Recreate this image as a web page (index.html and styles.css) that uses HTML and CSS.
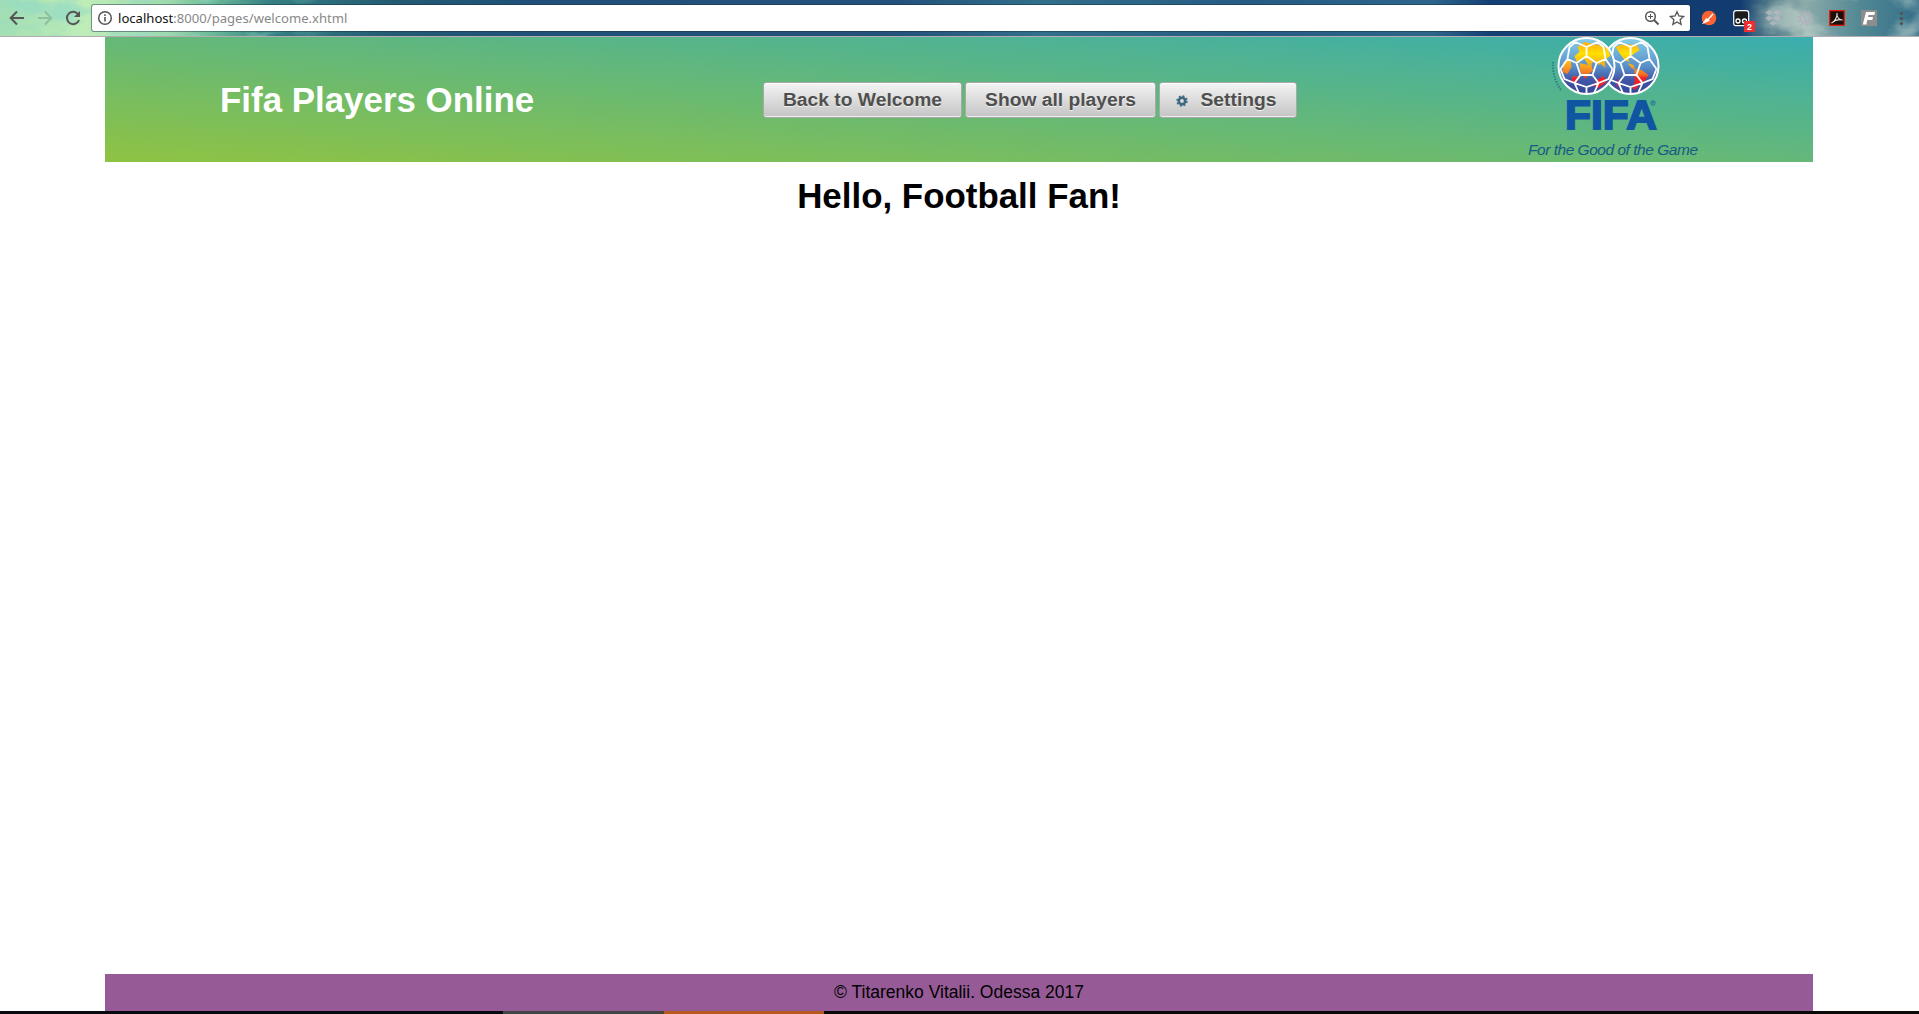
FILE: index.html
```html
<!DOCTYPE html>
<html lang="en">
<head>
<meta charset="utf-8">
<title>Fifa Players Online</title>
<link rel="stylesheet" href="styles.css">
</head>
<body>
<div class="toolbar">
  <svg class="sky" width="1919" height="36" aria-hidden="true">
    <defs>
      <filter id="cloud" x="0" y="0" width="100%" height="100%"><feTurbulence type="fractalNoise" baseFrequency=".025 .05" numOctaves="4" seed="8"/><feColorMatrix values="0 0 0 0 .3  0 0 0 0 .7  0 0 0 0 .56  4 0 0 0 -1.8"/></filter>
      <filter id="cloud2" x="0" y="0" width="100%" height="100%"><feTurbulence type="fractalNoise" baseFrequency=".018 .03" numOctaves="4" seed="4"/><feColorMatrix values="0 0 0 0 .68  0 0 0 0 .77  0 0 0 0 .69  4 0 0 0 -1.9"/></filter>
      <linearGradient id="fade"><stop offset="0" stop-color="#fff"/><stop offset=".6" stop-color="#fff"/><stop offset="1" stop-color="#000"/></linearGradient>
      <linearGradient id="fade2"><stop offset="0" stop-color="#000"/><stop offset=".15" stop-color="#fff"/><stop offset="1" stop-color="#fff"/></linearGradient>
      <mask id="m1"><rect width="340" height="36" fill="url(#fade)"/></mask>
      <mask id="m2"><rect x="1745" width="174" height="36" fill="url(#fade2)"/></mask>
    </defs>
    <g mask="url(#m1)"><rect width="340" height="36" filter="url(#cloud)" opacity=".7"/></g>
    <g mask="url(#m2)"><rect x="1745" width="174" height="36" filter="url(#cloud2)" opacity=".5"/></g>
  </svg>
  <svg class="nav-icons" width="92" height="36" fill="none" stroke="#555" stroke-width="2">
    <path d="M24 18H11M17 11.5L10.7 18l6.3 6.5"/>
    <path d="M38 18h13M45 11.5l6.3 6.5-6.3 6.5" stroke="#8fbf9f"/>
    <path d="M78.3 14.5A6.2 6.2 0 1 0 79 20"/><path d="M80 11v6h-6z" fill="#555" stroke="none"/>
  </svg>
  <div class="address">
    <svg width="16" height="16" fill="none" stroke="#555"><circle cx="8" cy="8" r="6.3" stroke-width="1.5"/><path d="M8 7v4.5M8 4.3v1.6" stroke-width="1.6"/></svg>
    <span class="url"><b>localhost</b>:8000/pages/welcome.xhtml</span>
    <svg width="42" height="18" fill="none" stroke="#555"><circle cx="6.5" cy="7.5" r="4.8" stroke-width="1.5"/><path d="M10 11l4.5 4.5" stroke-width="2"/><path d="M4 7.5h5M6.5 5v5"/><path d="M33 2.700l1.900 4.300 4.700.5-3.500 3.200 1 4.700-4.100-2.400-4.100 2.400 1-4.700-3.500-3.200 4.700-.5z" stroke-width="1.300"/></svg>
  </div>
  <svg class="extensions" width="229" height="36" viewBox="0 0 229 36">
    <circle cx="19" cy="18" r="7.3" fill="#fb6334"/><path d="M14 22.500l2.500-3.500 2 1.500zM18 19.500l5-5.500" stroke="#fff" stroke-width="1.500" fill="#fff"/>
    <rect x="43.700" y="10.700" width="15" height="15" rx="2.500" fill="#1c1c1c" stroke="#fff" stroke-width="1.200"/><circle cx="48" cy="21" r="2" fill="#123" stroke="#fff" stroke-width="1.300"/><circle cx="54.500" cy="21" r="2" fill="#123" stroke="#fff" stroke-width="1.300"/>
    <rect x="54" y="21" width="11" height="11" fill="#ee2e2e"/><text x="59.500" y="30" class="badge">2</text>
    <path fill="#b7b8c1" opacity=".8" d="M79 10l4 2.500-4 3-4-3zM87 10l4 2.500-4 3-4-3zM79 15.500l4 2.500-4 3-4-3zM87 15.500l4 2.500-4 3-4-3zM83 21l4 2-4 2.500-4-2.500z"/>
    <g stroke="#afb1bb" fill="none" opacity=".8"><circle cx="115" cy="18" r="4.800" stroke-width="2.500"/><circle cx="115" cy="18" r="7" stroke-width="2" stroke-dasharray="2.200 2.200"/><path d="M113 15l4 9 4-10" stroke-width="2.500"/></g>
    <rect x="139.700" y="10.700" width="14.600" height="14.600" fill="#1d0d0b" stroke="#e31c08" stroke-width="1.300"/><path d="M141.500 23c3-1 6-6 5.500-10-.5 4 2 7 5.500 7-4-1-8 .5-11 3z" fill="none" stroke="#e5e2df" stroke-width="1.100"/>
    <rect x="171" y="10" width="16" height="16" fill="#8d8d8d"/><path d="M176 12h9l-.7 3h-5.800l-.5 2h5l-.7 3h-5l-1 4.500h-3.500z" fill="#fff"/>
    <g fill="#555"><circle cx="211.500" cy="13.500" r="1.700"/><circle cx="211.500" cy="18.500" r="1.700"/><circle cx="211.500" cy="23.500" r="1.700"/></g>
  </svg>
</div>
<main class="page">
  <header class="header">
    <h1 class="brand">Fifa Players Online</h1>
    <nav class="menu">
      <button class="button welcome">Back to Welcome</button>
      <button class="button players">Show all players</button>
      <button class="button settings"><svg width="12" height="12"><circle cx="6" cy="6" r="3.200" fill="none" stroke="#3d6881" stroke-width="2.600"/><circle cx="6" cy="6" r="4.900" fill="none" stroke="#3d6881" stroke-width="1.600" stroke-dasharray="1.924"/></svg><span>Settings</span></button>
    </nav>
    <svg class="logo" viewBox="0 0 220 125" width="220" height="125">
      <defs>
        <linearGradient id="globe" x2="0" y2="1"><stop stop-color="#86d0ea"/><stop offset=".5" stop-color="#5a91c9"/><stop offset=".75" stop-color="#4056a6"/><stop offset="1" stop-color="#35459a"/></linearGradient>
        <linearGradient id="land" gradientUnits="userSpaceOnUse" x1="0" y1="-25" x2="0" y2="25"><stop stop-color="#ffa81c"/><stop offset=".25" stop-color="#ffe000"/><stop offset=".5" stop-color="#f9a51f"/><stop offset=".68" stop-color="#f56b24"/><stop offset=".74" stop-color="#ee2128"/></linearGradient>
        <clipPath id="disc"><circle r="28"/></clipPath>
        <g id="seams" fill="none" stroke="#fff" stroke-width="1.800"><path d="M0-10L10-3 6 9H-6L-10-3ZM0-10V-19M10-3L19-7M6 9L12 17M-6 9L-12 17M-10-3L-19-7M0-19L-11-24M0-19L11-24M19-7L17-19 11-24M19-7L26 3M12 17L22 13 26 3M12 17L8 26M-12 17L-8 26M-12 17L-22 13-26 3-19-7-17-19-11-24M12 17L0 21-12 17M0 21V28"/><circle r="28" stroke-width="2"/></g>
      </defs>
      <g transform="translate(130.500 29)"><circle r="28" fill="url(#globe)"/><g clip-path="url(#disc)"><path fill="url(#land)" d="M-15-19l8-3 13 1 3 5-6 4-5 5 1 3-5-2-5-7zM-3-3l6 2 2 5-4-2zM4 3l7 1 7 5-3 5-6 4-4 6-3-2 2-6z"/><path fill="#c02956" d="M-13 13l3 2-1 5-3 1z"/></g><use href="#seams"/></g>
      <g transform="translate(86.500 29)"><circle r="28" fill="url(#globe)"/><g clip-path="url(#disc)"><path fill="url(#land)" d="M-9-19l7-5 14 3 5 8 1 8-6 4-4-5-3 4 1 6-5-6-3-5-8 3-2-6 5-4zM-7-3l9 2 5 5-5 4-3 5-5-7zM-23-4l7-2 1 7-4 7-5-2zM-14 10l7 1-4 8-4-4zM10 14l7-4 3 6-8 6-4-2zM12-21l9 3 3 8-6 4 1 8-5-4z"/></g><use href="#seams"/></g>
      <path d="M53 25q-1 15 8 28" fill="none" stroke="#2e7f83" stroke-width="2" stroke-dasharray="1.500 1.300"/>
      <text class="fifa" x="65" y="92" textLength="92" lengthAdjust="spacingAndGlyphs">FIFA</text>
      <circle cx="153" cy="66" r="2.300" fill="none" stroke="#1b6594" stroke-width=".7"/><path d="M152.300 67.400v-2.800h1.400v1.400h-1.400l1.500 1.400" fill="none" stroke="#1b6594" stroke-width=".5"/>
      <text class="motto" x="28" y="118" textLength="170">For the Good of the Game</text>
    </svg>
  </header>
  <h1 class="greeting">Hello, Football Fan!</h1>
  <footer class="footer">© Titarenko Vitalii. Odessa 2017</footer>
</main>
<div class="taskbar"></div>
</body>
</html>
```
FILE: styles.css
```css
* { box-sizing: border-box; }
body { margin: 0; height: 1014px; display: flex; flex-direction: column; background: #fff; color: #000; font-family: "Liberation Sans", Arial, sans-serif; overflow: hidden; }
.toolbar { position: relative; height: 37px; flex: none; display: flex; align-items: flex-start; border-bottom: 1px solid #b5abb2; background: linear-gradient(90deg, #a4dfb2 0, #bfedb8 85px, #9dd8ad 170px, #68b797 215px, #347f82 270px, #245b73 390px, #205078 530px, #24527b 900px, #316f8b 1040px, #265b83 1250px, #2d668a 1430px, #154076 1490px, #123b70 1740px, #477285 1765px, #8cabaa 1805px, #528894 1860px, #346e89 1919px); }
.sky { position: absolute; left: 0; top: 0; }
.nav-icons, .extensions { position: relative; flex: none; }
.address { position: relative; display: flex; align-items: center; width: 1598px; height: 26px; margin-top: 5px; padding: 0 4px 0 5px; border-radius: 2px; background: #fff; box-shadow: 0 0 0 1px rgb(20 45 60 / 45%); }
.url { flex: 1; margin-left: 5px; color: #888; font: 13.100px "Noto Sans", sans-serif; }
.url b { color: #111; font-weight: 400; }
.badge { fill: #fff; font: bold 9px "Liberation Sans", sans-serif; text-anchor: middle; }
.page { width: 1708px; margin-left: 105px; flex: 1; display: flex; flex-direction: column; }
.header { height: 125px; display: flex; align-items: center; background: linear-gradient(to top right, #8fc343, #3aadae); }
.brand { width: 543px; margin: 1px 0 0 115px; color: #fff; font-size: 34.900px; line-height: 42px; white-space: nowrap; }
.menu { display: flex; gap: 3px; width: 534px; }
.button { height: 36px; padding: 0; display: flex; align-items: center; justify-content: center; border: 1px solid #a8a8a8; border-radius: 3px; background: linear-gradient(#f4f4f4, #c4c4c4); box-shadow: inset 0 1px #fff, inset 0 -1px #eee; color: #4f4f4f; text-shadow: 0 1px rgb(255 255 255 / 70%); font: bold 19.250px "Liberation Sans", Arial, sans-serif; white-space: nowrap; }
.welcome { width: 199px; }
.players { width: 191px; }
.settings { width: 138px; gap: 13px; padding-right: 4px; }
.settings svg { margin-top: 3px; }
.logo { margin-left: 203px; flex: none; }
.fifa { fill: #1055a2; stroke: #1055a2; stroke-width: 1.800px; font: bold 41px "Liberation Sans", sans-serif; }
.motto { fill: #175b83; font: italic 15.500px "Liberation Sans", sans-serif; }
.greeting { margin: 13px 0 0; text-align: center; font-size: 34.900px; line-height: 42px; }
.footer { margin-top: auto; height: 37px; background: #965b97; text-align: center; font-size: 17.500px; line-height: 37px; }
.taskbar { height: 3px; flex: none; background: linear-gradient(90deg, #080810 0 503px, #444 503px 664px, #b65a20 664px 824px, #0b0908 824px); }
```
